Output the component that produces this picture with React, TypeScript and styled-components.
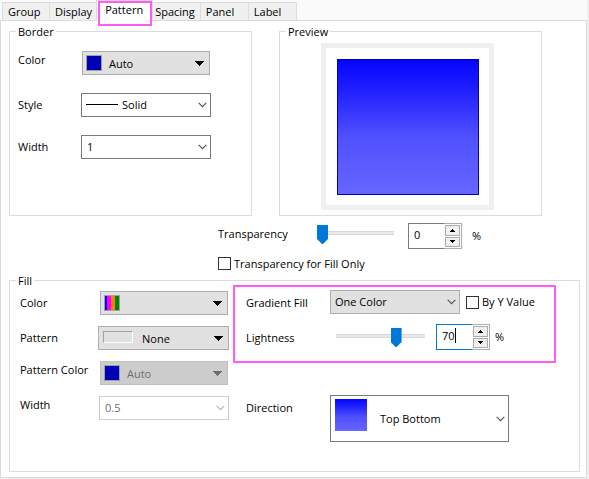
import React, { useState } from 'react';
import styled, { createGlobalStyle, css } from 'styled-components';

const colors = {
    face: '#f0f0f0',
    page: '#ffffff',
    stroke: '#dcdcdc',
    button: '#e1e1e1',
    buttonStroke: '#adadad',
    input: '#7a7a7a',
    disabled: '#cccccc',
    disabledStroke: '#bfbfbf',
    subtext: '#6d6d6d',
    accent: '#0078d7',
    marker: '#ff5cf4',
    navy: '#0000b4',
};

const gradient = 'linear-gradient(to bottom, #0505ff 0%, #1c1cff 20%, #5050ff 57%, #6666ff 100%)';

const tabs = ['Group', 'Display', 'Pattern', 'Spacing', 'Panel', 'Label'];

const ArrowDown: React.FC = () => (
    <svg width="9" height="5" viewBox="0 0 9 5" aria-hidden="true" shapeRendering="crispEdges">
        <path d="M0 0H9V1H8V2H7V3H6V4H5V5H4V4H3V3H2V2H1V1H0Z" fill="currentColor" />
    </svg>
);

const ChevronDown: React.FC = () => (
    <svg width="9" height="6" viewBox="0 0 9 6" aria-hidden="true">
        <path d="M0.7 0.9L4.5 4.7L8.3 0.9" fill="none" stroke="currentColor" strokeWidth="1.2" />
    </svg>
);

const SpinArrow: React.FC<{ up?: boolean }> = ({ up }) => (
    <svg width="5" height="3" viewBox="0 0 5 3" aria-hidden="true" shapeRendering="crispEdges">
        <path d={up ? 'M2 0H3V1H4V2H5V3H0V2H1V1H2Z' : 'M0 0H5V1H4V2H3V3H2V2H1V1H0Z'} fill="#000" />
    </svg>
);

interface ComboProps {
    id: string;
    options: string[];
    adornment?: React.ReactNode;
    indent?: number;
    disabled?: boolean;
    filled?: boolean;
    large?: boolean;
}

const Combo: React.FC<ComboProps> = ({ id, options, adornment, indent = 5, disabled, filled, large }) => (
    <ComboBox $large={large} $disabled={disabled}>
        <ComboSelect id={id} disabled={disabled} $indent={indent} $filled={filled}>
            {options.map((option) => <option key={option}>{option}</option>)}
        </ComboSelect>
        {adornment && <ComboAdornment>{adornment}</ComboAdornment>}
        <ComboArrow><ChevronDown /></ComboArrow>
    </ComboBox>
);

interface SpinProps {
    id: string;
    value: number;
    onValue: (value: number) => void;
    active?: boolean;
}

const Spin: React.FC<SpinProps> = ({ id, value, onValue, active }) => (
    <SpinBox>
        <SpinField $active={active}>
            <SpinInput
                id={id}
                type="number"
                min={0}
                max={100}
                value={value}
                onChange={(e) => onValue(Number(e.target.value))}
            />
            {active && <Caret />}
        </SpinField>
        <SpinButtons>
            <SpinButton type="button" aria-label="Increase" onClick={() => onValue(Math.min(100, value + 1))}>
                <SpinArrow up />
            </SpinButton>
            <SpinButton type="button" aria-label="Decrease" onClick={() => onValue(Math.max(0, value - 1))}>
                <SpinArrow />
            </SpinButton>
        </SpinButtons>
    </SpinBox>
);

const App: React.FC = (): React.ReactElement => {
    const [tab, setTab] = useState('Pattern');
    const [transparency, setTransparency] = useState(0);
    const [lightness, setLightness] = useState(70);

    return (
        <Dialog>
            <GlobalStyle />
            <TabStrip role="tablist">
                {tabs.map((name) => (
                    <Tab
                        key={name}
                        type="button"
                        role="tab"
                        aria-selected={tab === name}
                        $selected={tab === name}
                        onClick={() => setTab(name)}
                    >
                        {name}
                    </Tab>
                ))}
            </TabStrip>
            <TabPage role="tabpanel">
                <TopRow>
                    <Group>
                        <Legend>Border</Legend>
                        <BorderGrid>
                            <Label htmlFor="border-color" $raised>Color</Label>
                            <DropButton id="border-color" type="button">
                                <Swatch />
                                <DropText>Auto</DropText>
                                <ArrowDown />
                            </DropButton>
                            <Label htmlFor="border-style">Style</Label>
                            <Combo id="border-style" options={['Solid', 'Dash', 'Dot']} indent={40} adornment={<LineSample />} />
                            <Label htmlFor="border-width">Width</Label>
                            <Combo id="border-width" options={['1', '2', '3']} />
                        </BorderGrid>
                    </Group>
                    <Group>
                        <Legend>Preview</Legend>
                        <PreviewArea>
                            <PreviewFrame>
                                <PreviewFill />
                            </PreviewFrame>
                        </PreviewArea>
                    </Group>
                </TopRow>

                <TransparencyBlock>
                    <TransparencyRow>
                        <Label htmlFor="transparency">Transparency</Label>
                        <Slider
                            type="range"
                            aria-label="Transparency"
                            $width={77}
                            value={transparency}
                            onChange={(e) => setTransparency(Number(e.target.value))}
                        />
                        <Spin id="transparency" value={transparency} onValue={setTransparency} />
                        <Percent>%</Percent>
                    </TransparencyRow>
                    <CheckLabel>
                        <CheckBox type="checkbox" />
                        Transparency for Fill Only
                    </CheckLabel>
                </TransparencyBlock>

                <FillGroup>
                    <Legend>Fill</Legend>
                    <FillColumns>
                        <FillGrid>
                            <Label htmlFor="fill-color">Color</Label>
                            <DropButton id="fill-color" type="button">
                                <Swatch $striped />
                                <DropText />
                                <ArrowDown />
                            </DropButton>
                            <Label htmlFor="fill-pattern">Pattern</Label>
                            <DropButton id="fill-pattern" type="button" $wide>
                                <PatternSample />
                                <DropText>None</DropText>
                                <ArrowDown />
                            </DropButton>
                            <Label htmlFor="pattern-color" $raised>Pattern Color</Label>
                            <DropButton id="pattern-color" type="button" disabled>
                                <Swatch />
                                <DropText>Auto</DropText>
                                <ArrowDown />
                            </DropButton>
                            <Label htmlFor="fill-width" $raised>Width</Label>
                            <Combo id="fill-width" options={['0.5', '1']} disabled />
                        </FillGrid>
                        <GradientColumn>
                            <GradientBox>
                                <FieldRow>
                                    <FieldLabel htmlFor="gradient-fill">Gradient Fill</FieldLabel>
                                    <Combo id="gradient-fill" options={['One Color', 'Two Colors', 'None']} indent={4} filled />
                                    <YValueLabel>
                                        <CheckBox type="checkbox" />
                                        By Y Value
                                    </YValueLabel>
                                </FieldRow>
                                <FieldRow>
                                    <FieldLabel htmlFor="lightness">Lightness</FieldLabel>
                                    <LightnessControls>
                                        <Slider
                                            type="range"
                                            aria-label="Lightness"
                                            $width={89}
                                            value={lightness}
                                            onChange={(e) => setLightness(Number(e.target.value))}
                                        />
                                        <Spin id="lightness" value={lightness} onValue={setLightness} active />
                                        <Percent $near>%</Percent>
                                    </LightnessControls>
                                </FieldRow>
                            </GradientBox>
                            <DirectionRow>
                                <FieldLabel htmlFor="direction">Direction</FieldLabel>
                                <Combo
                                    id="direction"
                                    options={['Top Bottom', 'Left Right']}
                                    indent={49}
                                    adornment={<GradientSample />}
                                    large
                                />
                            </DirectionRow>
                        </GradientColumn>
                    </FillColumns>
                </FillGroup>
            </TabPage>
        </Dialog>
    );
};

const GlobalStyle = createGlobalStyle`
    * {
        box-sizing: border-box;
    }

    body {
        margin: 0;
        background: ${colors.face};
    }

    body, button, input, select {
        font-family: 'Open Sans', 'Noto Sans', sans-serif;
        font-size: 11px;
        color: #000;
    }
`;

const Dialog = styled.div`
    padding-right: 2px;
    line-height: 16px;
`;

const TabStrip = styled.div`
    display: flex;
    align-items: flex-end;
    height: 20px;
    padding-left: 2px;
    background: #fafafa;
`;

const Tab = styled.button<{ $selected: boolean }>`
    position: relative;
    min-width: 48px;
    height: 18px;
    margin: 0;
    padding: 0 5px;
    border: solid ${colors.stroke};
    border-width: 1px 1px 0 0;
    background: ${colors.face};
    line-height: 16px;
    text-align: left;

    &:first-child {
        border-left-width: 1px;
    }

    ${({ $selected }) => $selected && css`
        z-index: 1;
        height: 21px;
        margin: 0 -3px -1px -2px;
        padding: 0 9px 3px 8px;
        border-left-width: 1px;
        background: ${colors.page};

        &::after {
            content: '';
            position: absolute;
            inset: 0 0 -5px 1px;
            border: 2px solid ${colors.marker};
        }
    `}
`;

const TabPage = styled.div`
    padding: 3px 6px 5px 8px;
    border: 1px solid ${colors.stroke};
    background: ${colors.page};
`;

const TopRow = styled.div`
    display: grid;
    grid-template-columns: minmax(0, 243fr) minmax(0, 263fr);
    gap: 27px;
    padding-right: 38px;
`;

const Group = styled.fieldset`
    min-width: 0;
    margin: 0;
    padding: 0;
    border: 1px solid ${colors.stroke};
`;

const FillGroup = styled(Group)`
    padding-bottom: 29px;
`;

const Legend = styled.legend`
    height: 15px;
    margin-left: 6px;
    padding: 0 2px;
    line-height: 15px;
`;

const BorderGrid = styled.div`
    display: grid;
    grid-template-columns: 63px 130px;
    grid-auto-rows: 24px;
    row-gap: 18px;
    align-items: center;
    padding: 12px 8px 0;
`;

const Label = styled.label<{ $raised?: boolean }>`
    white-space: nowrap;
    line-height: 18px;
    align-self: ${({ $raised }) => ($raised ? 'start' : 'center')};
`;

const DropButton = styled.button<{ $wide?: boolean }>`
    display: flex;
    align-items: center;
    justify-self: end;
    width: ${({ $wide }) => ($wide ? 131 : 128)}px;
    height: 24px;
    margin: 0 ${({ $wide }) => ($wide ? 0 : 1)}px;
    padding: 0 5px 0 3px;
    border: 1px solid ${colors.buttonStroke};
    background: ${colors.button};

    &:disabled {
        border-color: ${colors.disabledStroke};
        background: ${colors.disabled};
        color: ${colors.subtext};
    }
`;

const DropText = styled.span`
    flex: 1;
    padding-left: 7px;
    text-align: left;
`;

const Swatch = styled.span<{ $striped?: boolean }>`
    flex: none;
    width: 16px;
    height: 16px;
    border: 1px solid #a0a0a0;
    background: ${({ $striped }) => ($striped
        ? 'linear-gradient(to right, #0000ff 2px, #ff00ff 2px 6px, #ff8000 6px 10px, #008000 10px)'
        : colors.navy)};
`;

const PatternSample = styled.span`
    width: 30px;
    height: 12px;
    margin: 0 2px 3px 1px;
    border: 1px solid;
    border-color: #a0a0a0 #fff #fff #a0a0a0;
`;

const ComboBox = styled.div<{ $large?: boolean; $disabled?: boolean }>`
    position: relative;
    flex: none;
    justify-self: end;
    width: ${({ $large }) => ($large ? 179 : 130)}px;
    height: ${({ $large }) => ($large ? 47 : 24)}px;
    color: ${({ $disabled }) => ($disabled ? '#b4b4b4' : '#555')};
`;

const ComboSelect = styled.select<{ $indent: number; $filled?: boolean }>`
    appearance: none;
    width: 100%;
    height: 100%;
    margin: 0;
    padding: 0 16px 1px ${({ $indent }) => $indent}px;
    border: 1px solid ${({ $filled }) => ($filled ? colors.buttonStroke : colors.input)};
    border-radius: 0;
    background: ${({ $filled }) => ($filled ? colors.button : colors.page)};

    &:disabled {
        border-color: ${colors.disabled};
        color: ${colors.subtext};
        opacity: 1;
    }
`;

const ComboAdornment = styled.span`
    position: absolute;
    top: 4px;
    left: 5px;
    pointer-events: none;
`;

const ComboArrow = styled.span`
    position: absolute;
    top: 0;
    right: 4px;
    bottom: 0;
    display: flex;
    align-items: center;
    pointer-events: none;
`;

const LineSample = styled.span`
    display: block;
    width: 32px;
    margin-top: 7px;
    border-top: 1px solid #000;
`;

const GradientSample = styled.span`
    display: block;
    width: 32px;
    height: 32px;
    background: ${gradient};
`;

const PreviewArea = styled.div`
    display: flex;
    justify-content: center;
    padding: 4px 6px 5px 0;
`;

const PreviewFrame = styled.div`
    width: 173px;
    height: 167px;
    padding: 11px 10px 10px 11px;
    border: 5px solid ${colors.face};
`;

const PreviewFill = styled.div`
    height: 136px;
    border: 1px solid ${colors.navy};
    background: ${gradient};
`;

const TransparencyBlock = styled.div`
    padding: 7px 0 1px 209px;
`;

const TransparencyRow = styled.div`
    display: grid;
    grid-template-columns: 99px 77px 68px auto;
    align-items: start;

    ${Label} {
        align-self: start;
        line-height: 22px;
    }
`;

const Slider = styled.input<{ $width: number }>`
    appearance: none;
    width: ${({ $width }) => $width}px;
    height: 20px;
    margin: 0 0 2px;
    background: none;

    &::-webkit-slider-runnable-track {
        height: 4px;
        border: 1px solid #d6d6d6;
        border-width: 1px 0;
        background: #e7eaea;
    }

    &::-webkit-slider-thumb {
        appearance: none;
        width: 11px;
        height: 19px;
        margin-top: -7px;
        background: ${colors.accent};
        clip-path: polygon(0 0, 100% 0, 100% 14px, 6px 100%, 5px 100%, 0 14px);
    }
`;

const SpinBox = styled.div`
    display: flex;
    width: 54px;
    height: 26px;
    margin-left: 14px;
`;

const SpinField = styled.div<{ $active?: boolean }>`
    position: relative;
    flex: 1;
    border: 1px solid ${({ $active }) => ($active ? colors.accent : colors.input)};
    border-right: 0;
`;

const SpinInput = styled.input`
    display: block;
    appearance: textfield;
    width: 100%;
    height: 20px;
    margin: 0;
    padding: 0 0 0 5px;
    border: 0;
    outline: 0;
    background: none;

    &::-webkit-inner-spin-button {
        appearance: none;
        margin: 0;
    }
`;

const Caret = styled.span`
    position: absolute;
    top: 3px;
    left: 18px;
    width: 1px;
    height: 15px;
    background: #000;
`;

const SpinButtons = styled.div`
    display: grid;
    grid-template-rows: 1fr 1fr;
    gap: 1px;
    width: 18px;
    padding: 1px;
    border: 1px solid ${colors.buttonStroke};
    border-left-width: 0;
`;

const SpinButton = styled.button`
    display: flex;
    align-items: center;
    justify-content: center;
    padding: 0;
    border: 1px solid ${colors.buttonStroke};
    background: ${colors.face};
`;

const Percent = styled.span<{ $near?: boolean }>`
    padding-left: ${({ $near }) => ($near ? 5 : 10)}px;
    line-height: 26px;
`;

const CheckLabel = styled.label`
    display: flex;
    align-items: center;
    gap: 3px;
    width: fit-content;
    height: 17px;
    margin-top: 6px;
    white-space: nowrap;
`;

const YValueLabel = styled(CheckLabel)`
    margin: 0 0 0 6px;
`;

const CheckBox = styled.input`
    appearance: none;
    width: 13px;
    height: 13px;
    margin: 0;
    border: 1px solid #333;
    background: ${colors.page};

    &:checked {
        background: ${colors.accent};
    }
`;

const FillColumns = styled.div`
    display: flex;
    gap: 4px;
    padding-left: 10px;
`;

const FillGrid = styled.div`
    display: grid;
    grid-template-columns: 78px 131px;
    grid-auto-rows: 24px;
    row-gap: 11px;
    align-items: center;
    align-content: start;
    padding-top: 3px;
`;

const GradientColumn = styled.div`
    flex: 1;
    min-width: 0;
    margin-top: -3px;
    padding-right: 23px;
`;

const GradientBox = styled.div`
    display: grid;
    gap: 10px;
    padding: 3px 0 11px 11px;
    border: 2px solid ${colors.marker};
`;

const FieldRow = styled.div`
    display: flex;
    align-items: center;
`;

const FieldLabel = styled(Label)`
    flex: none;
    width: 84px;
    padding-top: 2px;
`;

const LightnessControls = styled.div`
    display: flex;
    align-items: center;
    padding-left: 6px;

    ${SpinBox} {
        margin-left: 11px;
    }
`;

const DirectionRow = styled.div`
    display: flex;
    align-items: flex-start;
    margin-top: 32px;
    padding-left: 13px;

    ${FieldLabel} {
        align-self: flex-start;
        line-height: 22px;
    }
`;

export default App;
